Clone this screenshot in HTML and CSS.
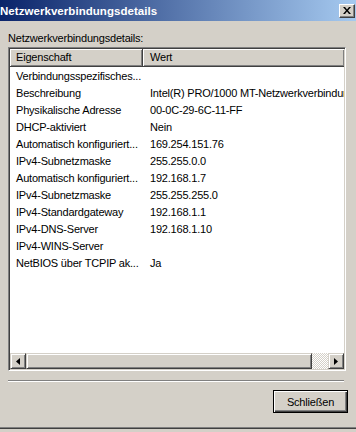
FILE: index.html
```html
<!DOCTYPE html>
<html lang="de">
<head>
  <meta charset="UTF-8" />
  <title>Netzwerkverbindungsdetails</title>
  <link rel="stylesheet" href="styles.css">
</head>
<body>
  <div class="window">
    <!-- Title bar -->
    <div class="titlebar">
      <span class="title">Netzwerkverbindungsdetails</span>
      <span class="close-btn">
        <svg width="8" height="7" viewBox="0 0 8 7">
          <path d="M0 0h2l2 2.5L6 0h2L5 3.5 8 7H6L4 4.5 2 7H0l3-3.5z" fill="#000"/>
        </svg>
      </span>
    </div>

    <div class="content">
      <div class="caption">Netzwerkverbindungsdetails:</div>

      <!-- List view -->
      <div class="listbox">
        <div class="list-head">
          <div class="col-head col-name">Eigenschaft</div>
          <div class="col-head col-value">Wert</div>
        </div>

        <div class="rows">
          <div class="row"><span class="cell-name">Verbindungsspezifisches...</span><span class="cell-value"></span></div>
          <div class="row"><span class="cell-name">Beschreibung</span><span class="cell-value">Intel(R) PRO/1000 MT-Netzwerkverbindung</span></div>
          <div class="row"><span class="cell-name">Physikalische Adresse</span><span class="cell-value">00-0C-29-6C-11-FF</span></div>
          <div class="row"><span class="cell-name">DHCP-aktiviert</span><span class="cell-value">Nein</span></div>
          <div class="row"><span class="cell-name">Automatisch konfiguriert...</span><span class="cell-value">169.254.151.76</span></div>
          <div class="row"><span class="cell-name">IPv4-Subnetzmaske</span><span class="cell-value">255.255.0.0</span></div>
          <div class="row"><span class="cell-name">Automatisch konfiguriert...</span><span class="cell-value">192.168.1.7</span></div>
          <div class="row"><span class="cell-name">IPv4-Subnetzmaske</span><span class="cell-value">255.255.255.0</span></div>
          <div class="row"><span class="cell-name">IPv4-Standardgateway</span><span class="cell-value">192.168.1.1</span></div>
          <div class="row"><span class="cell-name">IPv4-DNS-Server</span><span class="cell-value">192.168.1.10</span></div>
          <div class="row"><span class="cell-name">IPv4-WINS-Server</span><span class="cell-value"></span></div>
          <div class="row"><span class="cell-name">NetBIOS über TCPIP ak...</span><span class="cell-value">Ja</span></div>
        </div>

        <!-- Horizontal scrollbar -->
        <div class="hscroll">
          <span class="sb-btn">
            <svg width="4" height="7" viewBox="0 0 4 7"><path d="M4 0v7L0 3.5z" fill="#000"/></svg>
          </span>
          <span class="sb-thumb"></span>
          <span class="sb-track"></span>
          <span class="sb-btn">
            <svg width="4" height="7" viewBox="0 0 4 7"><path d="M0 0v7l4-3.5z" fill="#000"/></svg>
          </span>
        </div>
      </div>

      <div class="separator"></div>

      <div class="actions">
        <button class="btn-default" type="button">Schließen</button>
      </div>
    </div>
  </div>
</body>
</html>
```

FILE: styles.css
```css
:root {
  --face: #d4d0c8;
  --shadow: #808080;
  --dark: #404040;
  --light: #ffffff;
}

html, body {
  margin: 0;
  padding: 0;
}

body {
  width: 356px;
  height: 432px;
  overflow: hidden;
  background: var(--face);
  font-family: 'Liberation Sans', Arial, sans-serif;
  font-size: 11px;
  letter-spacing: -0.2px;
  color: #000;
}

.window {
  height: 429px;
  box-sizing: border-box;
  border-bottom: 1px solid var(--dark);
  box-shadow: inset 0 -1px var(--shadow);
  display: flex;
  flex-direction: column;
}

/* Title bar */
.titlebar {
  height: 21px;
  flex: none;
  display: flex;
  align-items: center;
  justify-content: space-between;
  padding: 0 1px 0 0;
  background: linear-gradient(to right, #0a246a, #a6caf0);
}

.title {
  color: #fff;
  font-weight: bold;
  font-size: 11.5px;
  letter-spacing: 0.05px;
}

.close-btn {
  width: 16px;
  height: 14px;
  box-sizing: border-box;
  display: flex;
  align-items: center;
  justify-content: center;
  background: var(--face);
  border: 1px solid;
  border-color: var(--light) var(--dark) var(--dark) var(--light);
  box-shadow: inset -1px -1px var(--shadow);
}

/* Dialog content */
.content {
  flex: 1;
  padding: 10px 8px 0 8px;
  display: flex;
  flex-direction: column;
}

.caption {
  line-height: 14px;
  margin-bottom: 2px;
}

.listbox {
  height: 324px;
  margin-right: 2px;
  box-sizing: border-box;
  border: 1px solid;
  border-color: var(--shadow) var(--light) var(--light) var(--shadow);
  box-shadow: inset 1px 1px var(--dark), inset -1px -1px var(--face);
  padding: 1px;
  background: #fff;
  display: flex;
  flex-direction: column;
  overflow: hidden;
}

.list-head {
  height: 18px;
  flex: none;
  display: flex;
}

.col-head {
  box-sizing: border-box;
  height: 18px;
  line-height: 17px;
  background: var(--face);
  border-right: 1px solid var(--dark);
  border-bottom: 1px solid var(--dark);
  box-shadow: inset 1px 1px var(--light), inset -1px -1px var(--shadow);
  white-space: nowrap;
}

.col-name {
  width: 133px;
  padding-left: 6px;
}

.col-value {
  flex: 1;
  padding-left: 7px;
  border-right: none;
}

.rows {
  flex: 1;
  padding-top: 1px;
  overflow: hidden;
}

.row {
  height: 17px;
  line-height: 17px;
  display: flex;
  white-space: nowrap;
}

.cell-name {
  width: 133px;
  flex: none;
  padding-left: 6px;
  box-sizing: border-box;
}

.cell-value {
  padding-left: 7px;
}

/* Scrollbar */
.hscroll {
  height: 16px;
  flex: none;
  display: flex;
}

.sb-btn,
.sb-thumb {
  box-sizing: border-box;
  height: 16px;
  background: var(--face);
  border: 1px solid;
  border-color: var(--face) var(--dark) var(--dark) var(--face);
  box-shadow: inset 1px 1px var(--light), inset -1px -1px var(--shadow);
}

.sb-btn {
  width: 16px;
  display: flex;
  align-items: center;
  justify-content: center;
}

.sb-thumb {
  width: 286px;
}

.sb-track {
  flex: 1;
  background: repeating-conic-gradient(#fff 0 25%, var(--face) 0 50%) 0 0 / 2px 2px;
}

.separator {
  margin-top: 9px;
  margin-right: 4px;
  height: 0;
  border-top: 1px solid var(--shadow);
  border-bottom: 1px solid var(--light);
}

.actions {
  display: flex;
  justify-content: flex-end;
  margin-top: 8px;
}

.btn-default {
  width: 75px;
  height: 23px;
  box-sizing: border-box;
  background: var(--face);
  border: 1px solid #000;
  box-shadow: inset 1px 1px var(--light), inset -1px -1px var(--dark), inset -2px -2px var(--shadow);
  font-family: inherit;
  font-size: 11px;
  letter-spacing: -0.2px;
  color: #000;
  padding: 0;
}
```
